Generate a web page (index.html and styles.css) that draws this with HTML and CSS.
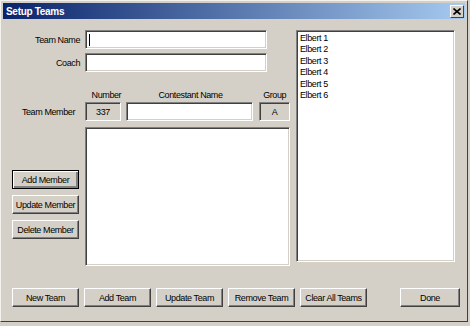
FILE: index.html
```html
<html>
<head>
    <link rel="stylesheet" href="styles.css">
</head>
<body>
    <div class="window">
        <div class="titlebar">
            <span class="title">Setup Teams</span>
            <span class="close">
                <svg width="8" height="7" viewBox="0 0 8 7">
                    <path d="M0.5,0.5 L7.5,6.5 M7.5,0.5 L0.5,6.5" stroke="#000" stroke-width="1.6" />
                </svg>
            </span>
        </div>
        <div class="main">
            <div class="form">
                <div class="row">
                    <label class="label">Team Name</label>
                    <div class="field wide"><span class="caret"></span></div>
                </div>
                <div class="row coach">
                    <label class="label">Coach</label>
                    <div class="field wide"></div>
                </div>
                <div class="row heads">
                    <span class="spacer"></span>
                    <span class="head num">Number</span>
                    <span class="head name">Contestant Name</span>
                    <span class="head grp">Group</span>
                </div>
                <div class="row member">
                    <label class="label member-label">Team Member</label>
                    <div class="field num readonly">337</div>
                    <div class="field name"></div>
                    <div class="field grp readonly">A</div>
                </div>
                <div class="row members">
                    <div class="member-actions">
                        <button class="btn default">Add Member</button>
                        <button class="btn">Update Member</button>
                        <button class="btn">Delete Member</button>
                    </div>
                    <div class="field listbox"></div>
                </div>
            </div>
            <div class="field teams">
                <div class="item">Elbert 1</div>
                <div class="item">Elbert 2</div>
                <div class="item">Elbert 3</div>
                <div class="item">Elbert 4</div>
                <div class="item">Elbert 5</div>
                <div class="item">Elbert 6</div>
            </div>
        </div>
        <div class="footer">
            <button class="btn">New Team</button>
            <button class="btn">Add Team</button>
            <button class="btn">Update Team</button>
            <button class="btn">Remove Team</button>
            <button class="btn">Clear All Teams</button>
            <button class="btn done">Done</button>
        </div>
    </div>
</body>
</html>
```

FILE: styles.css
```css
html,
body {
    margin: 0px;
    width: 100%;
    height: 100%;
    background: #d4d0c8;
}

body {
    font-family: "Liberation Sans", Arial, sans-serif;
    font-size: 9px;
    letter-spacing: -0.4px;
    color: #000;
}

.window {
    box-sizing: border-box;
    width: 468px;
    height: 322px;
    padding: 2px;
    border: 1px solid;
    border-color: #f4f2ee #404040 #404040 #f4f2ee;
    background: #d4d0c8;
}

.titlebar {
    height: 16px;
    display: flex;
    align-items: center;
    justify-content: space-between;
    background: linear-gradient(to right, #0a246a, #a6caf0);
}

.title {
    padding-left: 3px;
    color: #fff;
    font-size: 10px;
    font-weight: bold;
    letter-spacing: -0.3px;
}

.close {
    width: 12px;
    height: 11px;
    margin-right: 1px;
    display: flex;
    align-items: center;
    justify-content: center;
    background: #d4d0c8;
    border: 1px solid;
    border-color: #fff #404040 #404040 #fff;
}

.main {
    display: flex;
    gap: 6px;
    padding-top: 11px;
}

.form {
    width: 287px;
}

.row {
    display: flex;
    align-items: center;
}

.label {
    width: 77px;
    padding-right: 5px;
    text-align: right;
}

.member-label {
    padding-right: 10px;
    width: 72px;
}

.field {
    box-sizing: border-box;
    height: 19px;
    background: #fff;
    border: 1px solid;
    border-color: #808080 #fff #fff #808080;
    box-shadow: inset 1px 1px #404040, inset -1px -1px #d4d0c8;
}

.wide {
    width: 182px;
    padding: 3px 0 0 3px;
}

.caret {
    display: block;
    width: 1px;
    height: 12px;
    background: #000;
}

.coach {
    margin-top: 4px;
}

.heads {
    margin-top: 17px;
    height: 12px;
}

.spacer {
    width: 82px;
}

.head {
    text-align: center;
}

.num {
    width: 36px;
    margin-left: 3px;
}

.name {
    width: 127px;
    margin-left: 5px;
}

.grp {
    width: 31px;
    margin-left: 6px;
}

.heads .num {
    margin-left: 6px;
    width: 33px;
}

.member {
    margin-top: 1px;
}

.member .num {
    margin-left: 0px;
}

.readonly {
    background: #d4d0c8;
    display: flex;
    align-items: center;
    justify-content: center;
}

.members {
    margin-top: 6px;
    align-items: flex-start;
}

.member-actions {
    width: 73px;
    padding-left: 9px;
    padding-top: 43px;
    display: flex;
    flex-direction: column;
    gap: 6px;
}

.listbox {
    width: 205px;
    height: 139px;
}

.teams {
    width: 159px;
    height: 232px;
    padding: 2px 0 0 3px;
}

.item {
    height: 11.4px;
    line-height: 11.4px;
}

.footer {
    display: flex;
    gap: 5px;
    padding: 22px 0 0 9px;
}

.btn {
    box-sizing: border-box;
    width: 67px;
    height: 19px;
    padding: 0px;
    font-family: "Liberation Sans", Arial, sans-serif;
    font-size: 9px;
    letter-spacing: -0.4px;
    color: #000;
    background: #d4d0c8;
    border: 1px solid;
    border-color: #fff #404040 #404040 #fff;
    box-shadow: inset -1px -1px #808080;
}

.default {
    border-color: #000;
    box-shadow: inset 1px 1px #fff, inset -2px -2px #808080;
}

.done {
    width: 60px;
    margin-left: 28px;
}
```
